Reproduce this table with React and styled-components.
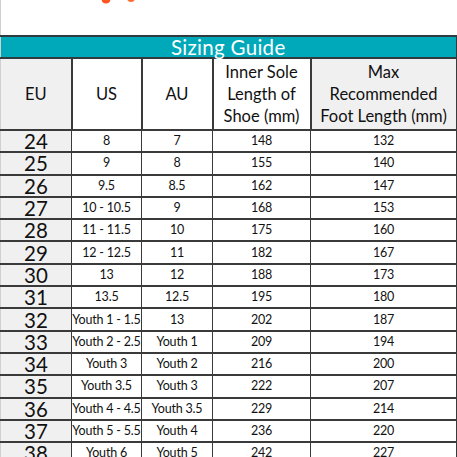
import React from 'react';
import styled, { createGlobalStyle } from 'styled-components';

const GlobalStyle = createGlobalStyle`
  body {
    margin: 0;
    background: #ffffff;
    font-family: Lato, "Open Sans", sans-serif;
  }
`;

const Page = styled.div`
  width: 457px;
  height: 457px;
  overflow: hidden;
  background: #ffffff;
`;

const LogoStrip = styled.div`
  height: 35px;
  border-left: 1px solid #d0d0d0;
  box-sizing: border-box;
`;

const Table = styled.table`
  width: 456px;
  border-collapse: collapse;
  table-layout: fixed;
  color: #111111;
`;

const TitleCell = styled.th`
  height: 20px;
  padding: 0;
  background: #00a9b9;
  color: #ffffff;
  font-size: 20.5px;
  line-height: 20px;
  font-weight: 400;
  letter-spacing: 0.3px;
  border: 2px solid #2f3b3e;
  border-left: 1px solid #d0d0d0;
`;

const HeadCell = styled.th`
  height: 70px;
  padding: 0;
  font-size: 16.5px;
  font-weight: 400;
  line-height: 22px;
  white-space: nowrap;
  background: ${p => (p.shaded ? '#f0f0f0' : '#ffffff')};
  border: 2px solid #3a3a3a;
  border-top: none;
  &:first-child {
    border-left: 1px solid #d0d0d0;
  }
`;

const Row = styled.tr`
  height: 22.3px;
`;

const Cell = styled.td`
  padding: 0;
  text-align: center;
  white-space: nowrap;
  font-size: ${p => (p.big ? '20.5px' : '12.5px')};
  letter-spacing: ${p => (p.big ? '0' : '-0.2px')};
  line-height: 18px;
  background: ${p => (p.big ? '#f0f0f0' : '#ffffff')};
  border: 2px solid #3a3a3a;
  border-left-width: 1.5px;
  border-right-width: 1.5px;
  &:first-child {
    border-left: 1px solid #d0d0d0;
  }
`;

const sizes = [
  ['24', '8', '7', '148', '132'],
  ['25', '9', '8', '155', '140'],
  ['26', '9.5', '8.5', '162', '147'],
  ['27', '10 - 10.5', '9', '168', '153'],
  ['28', '11 - 11.5', '10', '175', '160'],
  ['29', '12 - 12.5', '11', '182', '167'],
  ['30', '13', '12', '188', '173'],
  ['31', '13.5', '12.5', '195', '180'],
  ['32', 'Youth 1 - 1.5', '13', '202', '187'],
  ['33', 'Youth 2 - 2.5', 'Youth 1', '209', '194'],
  ['34', 'Youth 3', 'Youth 2', '216', '200'],
  ['35', 'Youth 3.5', 'Youth 3', '222', '207'],
  ['36', 'Youth 4 - 4.5', 'Youth 3.5', '229', '214'],
  ['37', 'Youth 5 - 5.5', 'Youth 4', '236', '220'],
  ['38', 'Youth 6', 'Youth 5', '242', '227'],
];

function Logo() {
  // only the bottom of the brand mark peeks into the frame
  return (
    <svg width="457" height="35" viewBox="0 0 457 35">
      <circle cx="105" cy="-1" r="4.5" fill="#ff5622" />
      <circle cx="130" cy="-2" r="4" fill="#ff6a2e" />
    </svg>
  );
}

export default function App() {
  return (
    <Page>
      <GlobalStyle />
      <LogoStrip>
        <Logo />
      </LogoStrip>
      <Table>
        <colgroup>
          <col style={{width: 71}} />
          <col style={{width: 70}} />
          <col style={{width: 71}} />
          <col style={{width: 98}} />
          <col style={{width: 146}} />
        </colgroup>
        <thead>
          <tr>
            <TitleCell colSpan={5}>Sizing Guide</TitleCell>
          </tr>
          <tr>
            <HeadCell shaded>EU</HeadCell>
            <HeadCell>US</HeadCell>
            <HeadCell>AU</HeadCell>
            <HeadCell>
              Inner Sole
              <br />
              Length of
              <br />
              Shoe (mm)
            </HeadCell>
            <HeadCell shaded>
              Max
              <br />
              Recommended
              <br />
              Foot Length (mm)
            </HeadCell>
          </tr>
        </thead>
        <tbody>
          {sizes.map(row => (
            <Row key={row[0]}>
              {row.map((val, i) => (
                <Cell key={i} big={i === 0}>
                  {val}
                </Cell>
              ))}
            </Row>
          ))}
        </tbody>
      </Table>
    </Page>
  );
}
